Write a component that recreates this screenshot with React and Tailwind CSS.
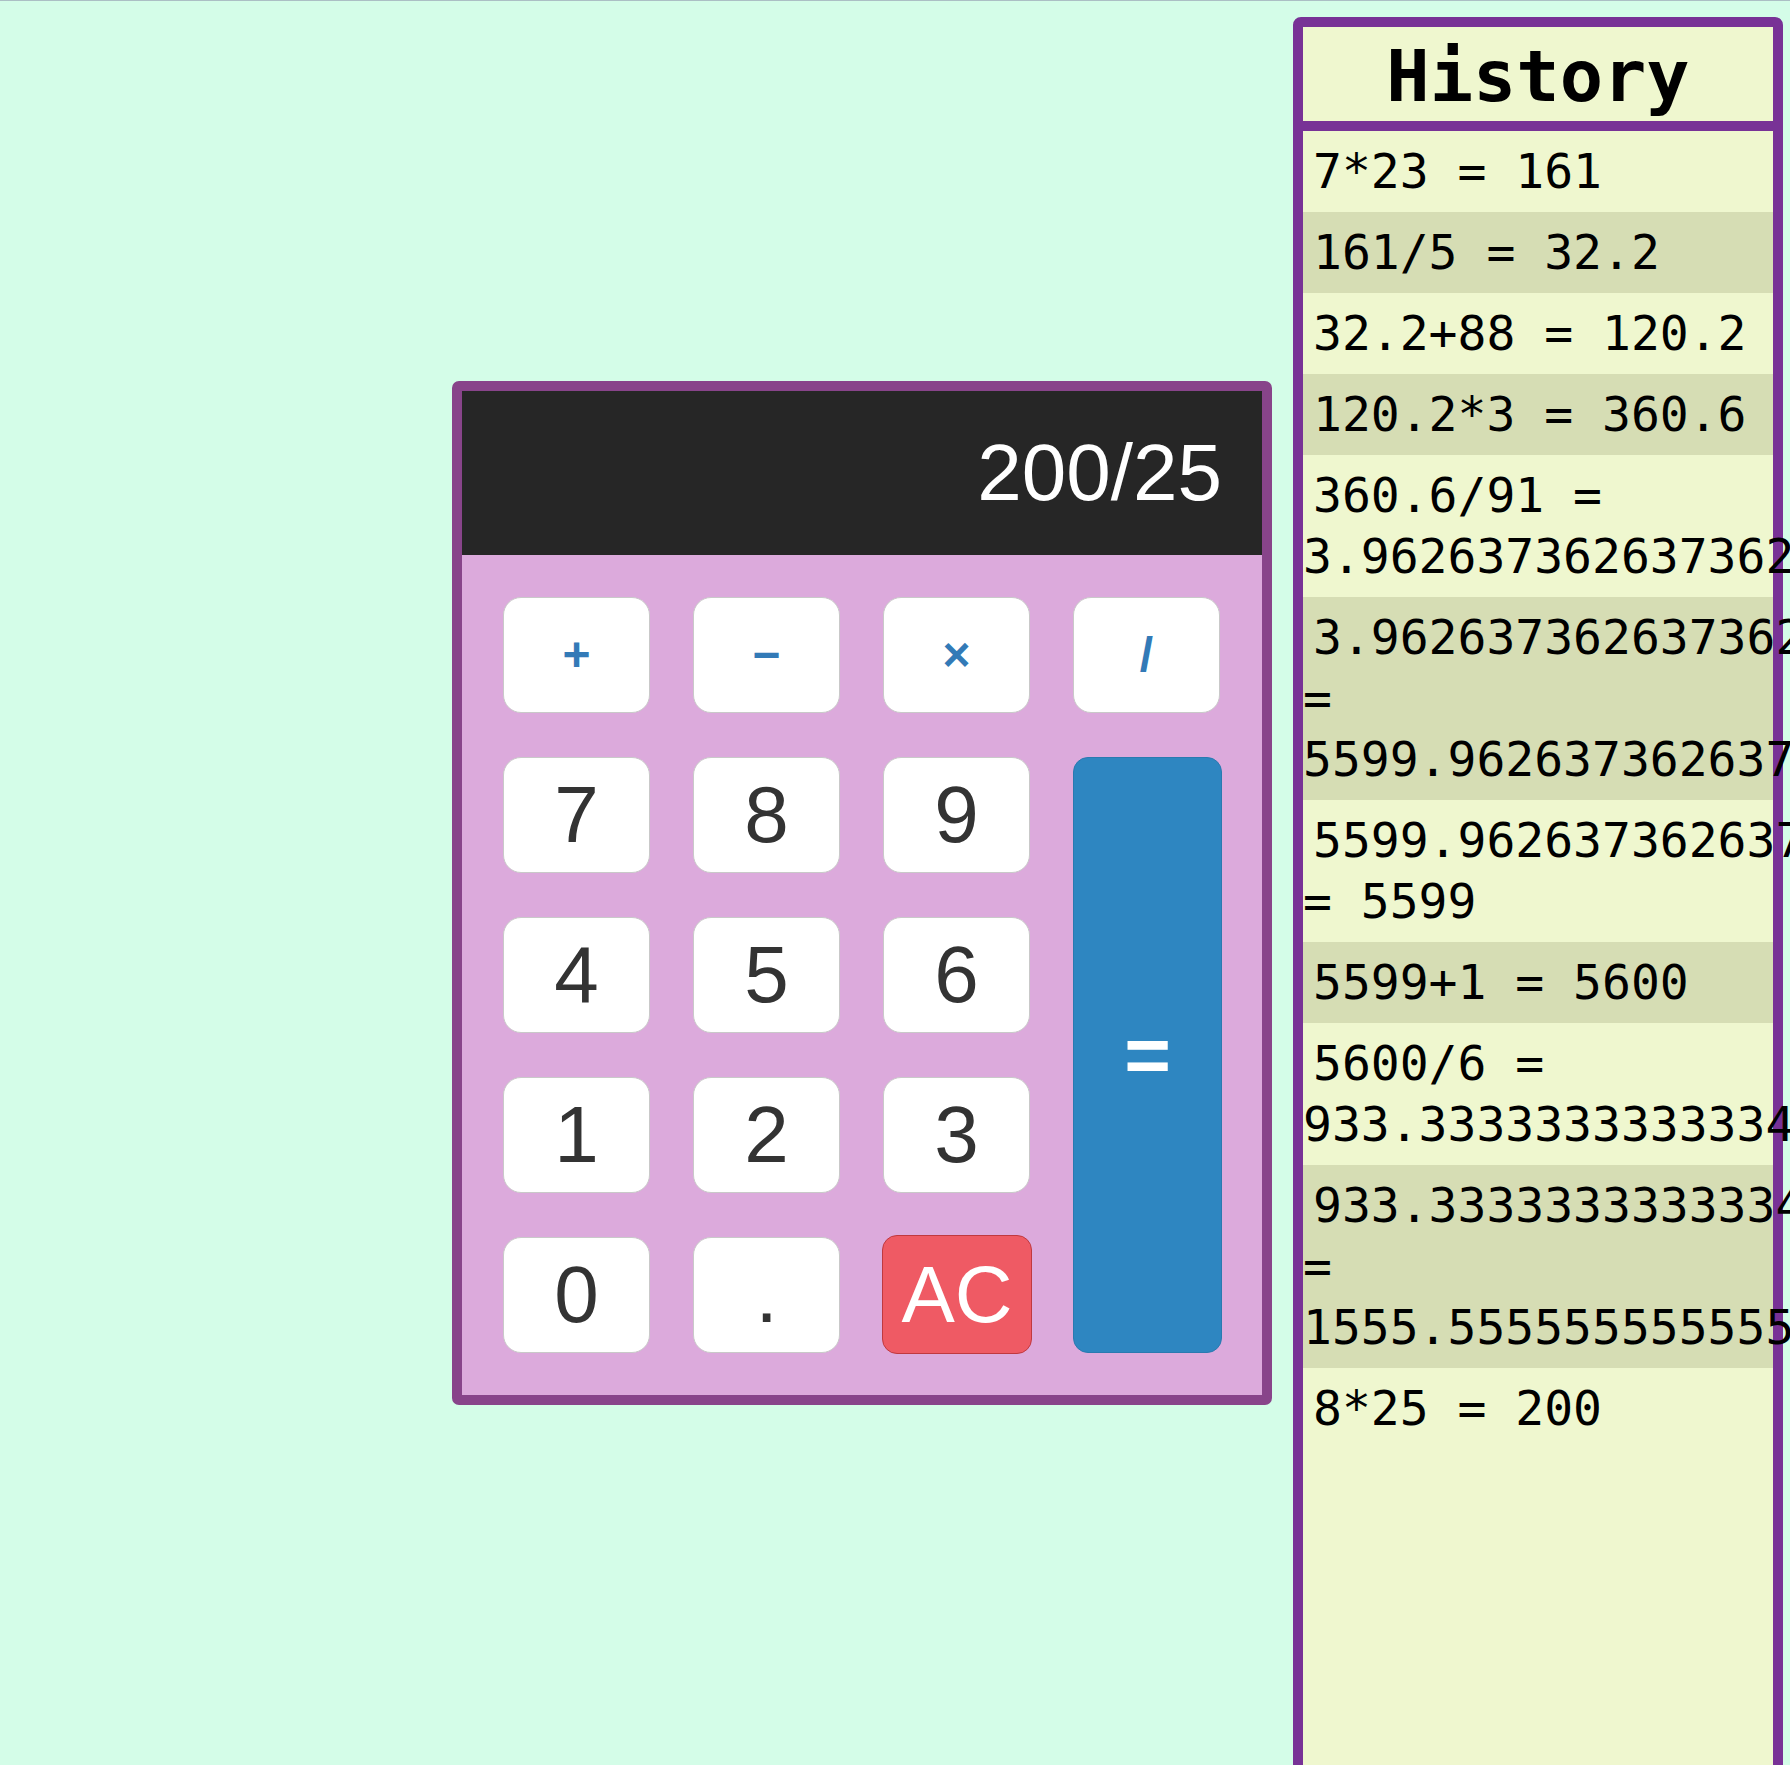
import React, { useState } from "react";

const history = [
  "7*23 = 161",
  "161/5 = 32.2",
  "32.2+88 = 120.2",
  "120.2*3 = 360.6",
  "360.6/91 = 3.962637362637362",
  "3.962637362637362+5596 = 5599.962637362637",
  "5599.962637362637\u2060-\u20600.962637362637 = 5599",
  "5599+1 = 5600",
  "5600/6 = 933.3333333333334",
  "933.3333333333334+622.2222222222222 = 1555.5555555555556",
  "8*25 = 200",
];

const OpButton = ({ label }) => (
  <button className="h-[116px] w-[147px] rounded-[18px] border border-[#c9c9c9] bg-white text-[48px] font-bold text-[#337ab7] font-['Liberation_Sans',Arial,sans-serif] flex items-center justify-center">
    {label}
  </button>
);

const NumButton = ({ label }) => (
  <button className="h-[116px] w-[147px] rounded-[18px] border border-[#c9c9c9] bg-white text-[80px] leading-none text-[#333] font-['Liberation_Sans',Arial,sans-serif] flex items-center justify-center">
    {label}
  </button>
);

const App = () => {
  const [display] = useState("200/25");

  return (
    <div className="h-screen overflow-hidden bg-[#d4fde8] border-t border-[#abbfc4]">
      <div className="flex items-start">
        {/* Calculator */}
        <div className="ml-[452px] mt-[380px] w-[820px] rounded-[7px] border-[10px] border-[#88448a] bg-[#dcaadc]">
          <div className="h-[164px] bg-[#262626] flex items-center justify-end pr-[40px] text-white text-[80px] leading-none font-['Liberation_Sans',Arial,sans-serif]">
            {display}
          </div>
          <div className="grid grid-cols-[repeat(4,147px)] grid-rows-[repeat(5,116px)] gap-x-[43px] gap-y-[44px] pl-[41px] pr-[42px] py-[42px]">
            <OpButton label="+" />
            <OpButton label="−" />
            <OpButton label="×" />
            <OpButton label="/" />
            <NumButton label="7" />
            <NumButton label="8" />
            <NumButton label="9" />
            <button className="row-span-4 w-[149px] rounded-[15px] border border-[#2a7ab0] bg-[#2e86c1] text-white text-[80px] font-bold leading-none font-['Liberation_Sans',Arial,sans-serif] flex items-center justify-center">
              =
            </button>
            <NumButton label="4" />
            <NumButton label="5" />
            <NumButton label="6" />
            <NumButton label="1" />
            <NumButton label="2" />
            <NumButton label="3" />
            <NumButton label="0" />
            <NumButton label="." />
            <button className="-mt-[2px] -ml-px h-[119px] w-[150px] rounded-[15px] border border-[#c0393f] bg-[#ef5a64] text-white text-[80px] leading-none font-['Liberation_Sans',Arial,sans-serif] flex items-center justify-center">
              AC
            </button>
          </div>
        </div>

        {/* History */}
        <div className="ml-auto mr-[7px] mt-[16px] w-[490px] h-[1800px] rounded-t-[8px] border-[10px] border-[#783296] bg-[#eff7cf] font-['DejaVu_Sans_Mono',monospace] text-black">
          <div className="h-[104px] border-b-[10px] border-[#783296] pt-[4px] text-center text-[72px] font-bold leading-[90px]">
            History
          </div>
          <ul>
            {history.map((item, index) => (
              <li
                key={index}
                className={`py-[10px] text-[48px] leading-[61px] indent-[10px] ${index % 2 === 1 ? "bg-[#d6ddb4]" : ""}`}
              >
                {item}
              </li>
            ))}
          </ul>
        </div>
      </div>
    </div>
  );
};

export default App;
